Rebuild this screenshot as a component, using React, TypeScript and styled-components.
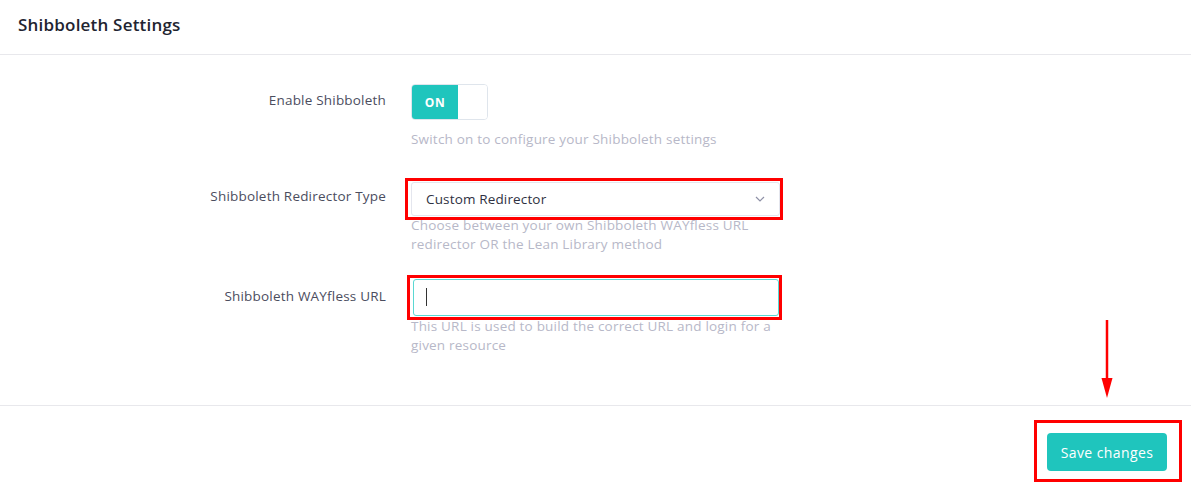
import styled, { createGlobalStyle } from 'styled-components';

const Teal = '#1fc5bd';
const LabelColor = '#4b4d5e';
const HintColor = '#b7b8c8';
const Line = '#e8e8ec';
const Mark = '#ff0000';

const GlobalStyle = createGlobalStyle`
  html, body {
    margin: 0;
    padding: 0;
    background: #fff;
    font-family: "Open Sans", "Noto Sans", sans-serif;
  }
`;

export default function App() {
  return (
    <Page>
      <GlobalStyle />
      <Header>
        <Title>Shibboleth Settings</Title>
      </Header>

      <Form>
        <Row $mt={29}>
          <Label $pt={6.5}>Enable Shibboleth</Label>
          <Field>
            <Toggle>
              <ToggleOn>ON</ToggleOn>
              <ToggleOff />
            </Toggle>
            <Hint $mt={9.5}>Switch on to configure your Shibboleth settings</Hint>
          </Field>
        </Row>

        <Row $mt={29}>
          <Label $pt={9}>Shibboleth Redirector Type</Label>
          <Field>
            <Marked $shift={6} $width={378}>
              <Select>
                <span>Custom Redirector</span>
                <svg width="10" height="6" viewBox="0 0 10 6">
                  <path d="M1 1l4 4 4-4" fill="none" stroke="#8e90a6" strokeWidth="1.2" />
                </svg>
              </Select>
            </Marked>
            <Hint $mt={-4}>
              Choose between your own Shibboleth WAYfless URL
              <br />
              redirector OR the Lean Library method
            </Hint>
          </Field>
        </Row>

        <Row $mt={21}>
          <Label $pt={12}>Shibboleth WAYfless URL</Label>
          <Field>
            <Marked $shift={4} $width={375}>
              <Input>
                <Caret />
              </Input>
            </Marked>
            <Hint $mt={-3}>
              This URL is used to build the correct URL and login for a
              <br />
              given resource
            </Hint>
          </Field>
        </Row>
      </Form>

      <Footer>
        <SaveMark>
          <SaveButton>Save changes</SaveButton>
        </SaveMark>
      </Footer>

      <Arrow width="14" height="80" viewBox="0 0 14 80">
        <line x1="7" y1="0" x2="7" y2="62" stroke={Mark} strokeWidth="2.5" />
        <path d="M1.5 58 L12.5 58 L7 78 Z" fill={Mark} />
      </Arrow>
    </Page>
  );
}

const Page = styled.div`
  position: relative;
  width: 1191px;
  height: 489px;
  background: #fff;
  overflow: hidden;
`;

const Header = styled.div`
  height: 55px;
  display: flex;
  align-items: center;
  padding-left: 18px;
  border-bottom: 1px solid ${Line};
  box-sizing: border-box;
`;

const Title = styled.h1`
  margin: 0;
  font-size: 17px;
  letter-spacing: 0.2px;
  font-weight: 600;
  color: #222430;
  padding-bottom: 6px;
`;

const Form = styled.div`
  display: flow-root;
  height: 351px;
  box-sizing: border-box;
  border-bottom: 1px solid ${Line};
`;

const Row = styled.div<{ $mt: number }>`
  display: grid;
  grid-template-columns: 386px 370px;
  column-gap: 25px;
  margin-top: ${(p) => p.$mt}px;
`;

const Label = styled.div<{ $pt: number }>`
  text-align: right;
  font-size: 13.5px;
  letter-spacing: 0.2px;
  color: ${LabelColor};
  padding-top: ${(p) => p.$pt}px;
  line-height: 19px;
`;

const Field = styled.div`
  display: flex;
  flex-direction: column;
  align-items: flex-start;
`;

const Hint = styled.div<{ $mt: number }>`
  font-size: 13.5px;
  letter-spacing: 0.2px;
  line-height: 19px;
  color: ${HintColor};
  margin-top: ${(p) => p.$mt}px;
  position: relative;
`;

const Toggle = styled.div`
  display: flex;
  width: 77px;
  height: 36px;
  border: 1px solid #dfe5ec;
  border-radius: 4px;
  overflow: hidden;
  box-sizing: border-box;
`;

const ToggleOn = styled.div`
  width: 46px;
  background: ${Teal};
  color: #fff;
  font-size: 12px;
  font-weight: 700;
  letter-spacing: 0.6px;
  display: flex;
  align-items: center;
  justify-content: center;
`;

const ToggleOff = styled.div`
  flex: 1;
  background: #fff;
`;

const Marked = styled.div<{ $shift: number; $width: number }>`
  border: 3px solid ${Mark};
  padding: 1px 0 1px 3px;
  margin-left: -${(p) => p.$shift}px;
  width: ${(p) => p.$width}px;
  box-sizing: border-box;
`;

const Select = styled.div`
  height: 34px;
  display: flex;
  align-items: center;
  justify-content: space-between;
  padding: 0 14px;
  border: 1px solid #e4e6ee;
  border-radius: 3px;
  font-size: 13.5px;
  letter-spacing: 0.15px;
  color: #2f3142;
  box-sizing: border-box;
`;

const Input = styled.div`
  height: 37px;
  display: flex;
  align-items: center;
  padding-left: 12px;
  border: 1px solid #5ad8d3;
  border-radius: 3px;
  box-sizing: border-box;
`;

const Caret = styled.span`
  width: 1px;
  height: 18px;
  background: #333;
`;

const Footer = styled.div`
  display: flex;
  justify-content: flex-end;
  padding: 27px 24px 0 0;
`;

const SaveMark = styled.div`
  border: 3px solid ${Mark};
  padding: 10px 12px 8px 10px;
  margin-top: -13px;
  margin-right: -15px;
`;

const SaveButton = styled.button`
  border: none;
  background: ${Teal};
  color: #fff;
  font-family: inherit;
  font-size: 14px;
  letter-spacing: 0.4px;
  font-weight: 500;
  width: 120px;
  height: 38px;
  border-radius: 4px;
  cursor: pointer;
`;

const Arrow = styled.svg`
  position: absolute;
  left: 1100px;
  top: 320px;
`;
